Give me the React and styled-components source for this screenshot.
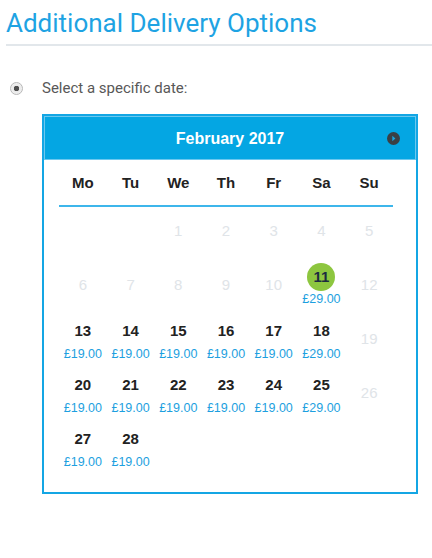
import styled, { createGlobalStyle } from "styled-components";

const GlobalStyle = createGlobalStyle`
  body {
    margin: 0;
    background: #fff;
    font-family: "Liberation Sans", Arial, sans-serif;
  }
`;

const Page = styled.div`
  width: 432px;
  height: 558px;
  overflow: hidden;
`;

const Heading = styled.h1`
  margin: 0 0 0 6px;
  padding: 6px 0 0;
  height: 38px;
  font-family: Roboto, "Open Sans", sans-serif;
  font-weight: 400;
  font-size: 26px;
  line-height: 34px;
  color: #1ea3e3;
  border-bottom: 2px solid #e2e7eb;
  white-space: nowrap;
`;

const OptionRow = styled.label`
  display: flex;
  align-items: center;
  gap: 19px;
  margin: 34px 0 0 10px;
  height: 16px;
  font-family: Roboto, "Open Sans", sans-serif;
  font-size: 15px;
  color: #585858;
`;

const Radio = styled.span`
  width: 13px;
  height: 13px;
  box-sizing: border-box;
  border-radius: 50%;
  border: 1px solid #b8b8b8;
  background: radial-gradient(circle, #4f4f4f 0 2.5px, #e9e9e9 3px, #f6f6f6 100%);
`;

const Calendar = styled.div`
  margin: 18px 0 0 42px;
  width: 376px;
  box-sizing: border-box;
  border: 2px solid #14a6e4;
  padding-bottom: 15px;
`;

const MonthBar = styled.div`
  position: relative;
  height: 44px;
  box-sizing: border-box;
  border: 1px solid #6cc8ef;
  background: #04a6e3;
  display: flex;
  align-items: center;
  justify-content: center;
  padding-top: 1px;
  color: #fff;
  font-weight: 700;
  font-size: 16px;
`;

const NextButton = styled.span`
  position: absolute;
  right: 15px;
  top: 15px;
  width: 13px;
  height: 13px;
  display: flex;
`;

const Body = styled.div`
  padding: 0 23px 0 15px;
`;

const Weekdays = styled.div`
  display: grid;
  grid-template-columns: repeat(7, 1fr);
  height: 45px;
  align-items: center;
  border-bottom: 2px solid #3db6eb;
  font-weight: 700;
  font-size: 15px;
  color: #222;
  text-align: center;
`;

const Days = styled.div`
  display: grid;
  grid-template-columns: repeat(7, 1fr);
  grid-auto-rows: 54px;
`;

const Cell = styled.div`
  display: flex;
  flex-direction: column;
  align-items: center;
  padding-top: ${(p) => (p.$off ? "14px" : "6px")};
`;

const DayNum = styled.span`
  font-size: 15px;
  line-height: 20px;
  font-weight: ${(p) => (p.$off ? 400 : 700)};
  color: ${(p) => (p.$off ? "#e0e4e8" : "#222")};
`;

const Selected = styled.span`
  margin-top: -4px;
  width: 28px;
  height: 28px;
  border-radius: 50%;
  background: #8dc63f;
  color: #1d2b40;
  font-size: 15px;
  font-weight: 700;
  line-height: 28px;
  text-align: center;
`;

const Price = styled.span`
  margin-top: ${(p) => (p.$tight ? "0" : "5px")};
  font-size: 12.5px;
  line-height: 16px;
  color: #1d9fe0;
`;

const weekdays = ["Mo", "Tu", "We", "Th", "Fr", "Sa", "Su"];

// Feb 2017 starts on a Wednesday
const prices = {
  11: "£29.00",
  13: "£19.00", 14: "£19.00", 15: "£19.00", 16: "£19.00", 17: "£19.00", 18: "£29.00",
  20: "£19.00", 21: "£19.00", 22: "£19.00", 23: "£19.00", 24: "£19.00", 25: "£29.00",
  27: "£19.00", 28: "£19.00",
};

const App = () => {
  const cells = [null, null];
  for (let d = 1; d <= 28; d++) cells.push(d);

  const renderDays = () =>
    cells.map((d, k) => {
      if (d === null) return <Cell key={k} />;
      const price = prices[d];
      if (!price) {
        return (
          <Cell key={k} $off>
            <DayNum $off>{d}</DayNum>
          </Cell>
        );
      }
      if (d === 11) {
        return (
          <Cell key={k}>
            <Selected>{d}</Selected>
            <Price $tight>{price}</Price>
          </Cell>
        );
      }
      return (
        <Cell key={k}>
          <DayNum>{d}</DayNum>
          <Price>{price}</Price>
        </Cell>
      );
    });

  return (
    <Page>
      <GlobalStyle />
      <Heading>Additional Delivery Options</Heading>
      <OptionRow>
        <Radio />
        Select a specific date:
      </OptionRow>
      <Calendar>
        <MonthBar>
          February 2017
          <NextButton>
            <svg width="13" height="13" viewBox="0 0 13 13">
              <circle cx="6.5" cy="6.5" r="6.5" fill="#3a3f44" />
              <path d="M5.3 3.8 L8.4 6.5 L5.3 9.2 Z" fill="#1aa6df" />
            </svg>
          </NextButton>
        </MonthBar>
        <Body>
          <Weekdays>
            {weekdays.map((w) => (
              <span key={w}>{w}</span>
            ))}
          </Weekdays>
          <Days>{renderDays()}</Days>
        </Body>
      </Calendar>
    </Page>
  );
};

export default App;
